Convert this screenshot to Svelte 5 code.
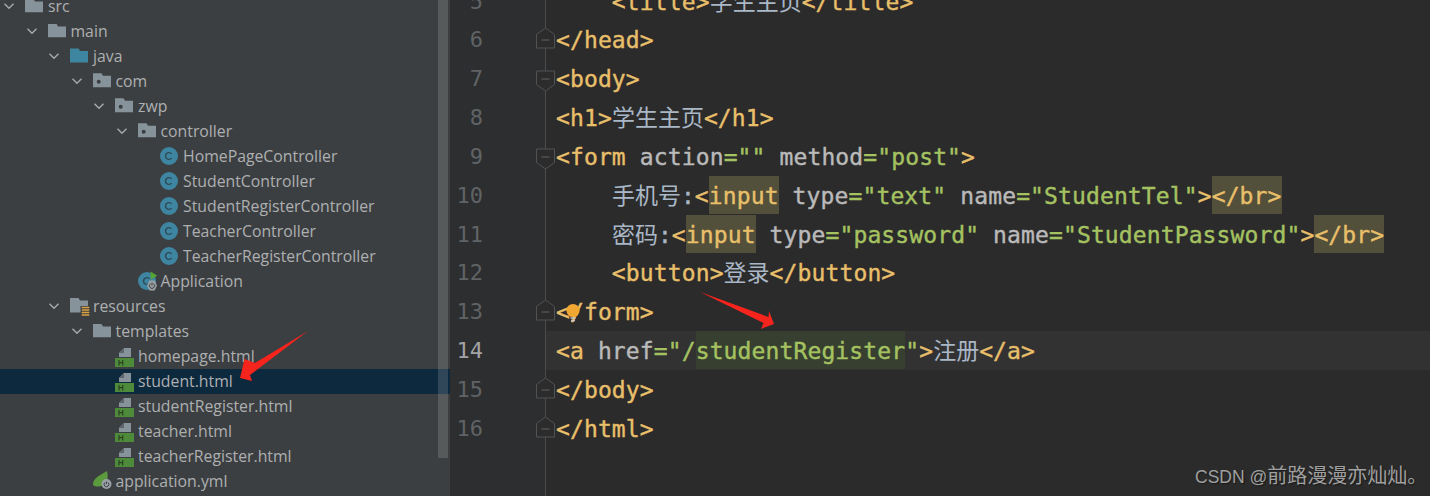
<script>
  const tree = [
    { l: 0, label: 'src', icon: 'folder', open: true },
    { l: 1, label: 'main', icon: 'folder', open: true },
    { l: 2, label: 'java', icon: 'source', open: true },
    { l: 3, label: 'com', icon: 'package', open: true },
    { l: 4, label: 'zwp', icon: 'package', open: true },
    { l: 5, label: 'controller', icon: 'package', open: true },
    { l: 6, label: 'HomePageController', icon: 'class' },
    { l: 6, label: 'StudentController', icon: 'class' },
    { l: 6, label: 'StudentRegisterController', icon: 'class' },
    { l: 6, label: 'TeacherController', icon: 'class' },
    { l: 6, label: 'TeacherRegisterController', icon: 'class' },
    { l: 5, label: 'Application', icon: 'app' },
    { l: 2, label: 'resources', icon: 'resources', open: true },
    { l: 3, label: 'templates', icon: 'folder', open: true },
    { l: 4, label: 'homepage.html', icon: 'html' },
    { l: 4, label: 'student.html', icon: 'html', selected: true },
    { l: 4, label: 'studentRegister.html', icon: 'html' },
    { l: 4, label: 'teacher.html', icon: 'html' },
    { l: 4, label: 'teacherRegister.html', icon: 'html' },
    { l: 3, label: 'application.yml', icon: 'yml' }
  ];

  const lines = [
    { n: 5, code: [['t', '    <title>'], ['c', '学生主页'], ['t', '</title>']] },
    { n: 6, fold: 'up', code: [['t', '</head>']] },
    { n: 7, fold: 'down', code: [['t', '<body>']] },
    { n: 8, code: [['t', '<h1>'], ['c', '学生主页'], ['t', '</h1>']] },
    { n: 9, fold: 'down', code: [['t', '<form '], ['n', 'action'], ['s', '=""'], ['n', ' method'], ['s', '="post"'], ['t', '>']] },
    { n: 10, code: [['t', '    '], ['c', '手机号'], ['p', ':'], ['t', '<'], ['h', 'input'], ['n', ' type'], ['s', '="text"'], ['n', ' name'], ['s', '="StudentTel"'], ['t', '>'], ['h', '</br>']] },
    { n: 11, code: [['t', '    '], ['c', '密码'], ['p', ':'], ['t', '<'], ['h', 'input'], ['n', ' type'], ['s', '="password"'], ['n', ' name'], ['s', '="StudentPassword"'], ['t', '>'], ['h', '</br>']] },
    { n: 12, code: [['t', '    <button>'], ['c', '登录'], ['t', '</button>']] },
    { n: 13, fold: 'up', bulb: true, code: [['t', '</form>']] },
    { n: 14, active: true, code: [['t', '<a '], ['n', 'href'], ['s', '="/'], ['g', 'studentRegister'], ['s', '"'], ['t', '>'], ['c', '注册'], ['t', '</a>']] },
    { n: 15, fold: 'up', code: [['t', '</body>']] },
    { n: 16, fold: 'up', code: [['t', '</html>']] },
    { n: '', code: [] },
    { n: '', code: [] }
  ];
</script>

<div class="ide">
  <aside class="project">
    <ul class="tree">
      {#each tree as item}
        <li class="row" class:selected={item.selected} style="--level: {item.l}">
          <span class="chevron">
            {#if item.open}
              <svg width="12" height="12" viewBox="0 0 12 12"><path d="M1.500 3.800 6 8.300l4.500-4.500" fill="none" stroke="#a7a9ab" stroke-width="1.400" /></svg>
            {/if}
          </span>
          <span class="icon">
            {#if item.icon === 'folder'}
              <svg width="18" height="18" viewBox="0 0 18 18"><path d="M0 2h8.500l1.500 2.500h8v10.800H0z" fill="#87939a" /></svg>
            {:else if item.icon === 'source'}
              <svg width="18" height="18" viewBox="0 0 18 18"><path d="M0 1.500h8.500l1.500 2.500h8v11.500H0z" fill="#3e86a0" /></svg>
            {:else if item.icon === 'package'}
              <svg width="18" height="18" viewBox="0 0 18 18"><path d="M0 1.300h8.500l1.500 2.500h8v11.500H0z" fill="#87939a" /><circle cx="5.700" cy="9.700" r="2" fill="#3c3f41" /></svg>
            {:else if item.icon === 'resources'}
              <svg class="over res" width="20" height="20" viewBox="0 0 20 20">
                <path d="M0 1h8.500L10 3.500h8v12H0z" fill="#87939a" />
                <path d="M10.500 9h9.500v10.500h-9.500z" fill="#3c3f41" />
                <path d="M11.700 10.500h7.600M11.700 13h7.600M11.700 15.500h7.600M11.700 18h7.600" stroke="#d9a343" stroke-width="1.500" />
              </svg>
            {:else if item.icon === 'class'}
              <svg width="18" height="18" viewBox="0 0 18 18"><circle cx="9" cy="9" r="9" fill="#3d85a1" /><path d="M11.600 6.900A3.400 3.400 0 1 0 11.600 11.100" fill="none" stroke="#2f4a56" stroke-width="1.400" /></svg>
            {:else if item.icon === 'app'}
              <svg class="over" width="22" height="22" viewBox="0 0 22 22">
                <circle cx="9" cy="11" r="9" fill="#3d85a1" />
                <path d="M11.600 8.900A3.400 3.400 0 1 0 11.600 13.100" fill="none" stroke="#2f4a56" stroke-width="1.400" />
                <path d="M12.700 1.500l6.500 4.200-6.500 3.800z" fill="#55a630" />
                <path d="M11.500 10.500h5.200l2.300 5-2.300 5h-5.200L9 15.500z" fill="#9aa1a6" />
                <path d="M12.400 13.700a2.600 2.600 0 1 0 3.200 0M14 12.500v3" fill="none" stroke="#3c3f41" stroke-width="1" />
              </svg>
            {:else if item.icon === 'html'}
              <svg class="over html" width="20" height="22" viewBox="0 0 20 22">
                <path d="M4 10V6L9 1h7v9z" fill="#87939a" />
                <path d="M4 6h5V1z" fill="#5d666c" />
                <path d="M0 11h19v9H0z" fill="#4d8a3a" />
                <path d="M4 13v5.500M7.700 13v5.500M4 15.700h3.700" fill="none" stroke="#2a4423" stroke-width="1.200" />
              </svg>
            {:else if item.icon === 'yml'}
              <svg class="over" width="20" height="20" viewBox="0 0 20 20">
                <path d="M0 15C0 8 6 6 14 1c1 5 1 8-1 12-2 3-9 5-13 2z" fill="#5c9a3e" />
                <circle cx="13.500" cy="14" r="5" fill="#9aa1a6" />
                <path d="M11.900 12.500a2.400 2.400 0 1 0 3.200 0M13.500 11.500v2.500" fill="none" stroke="#3c3f41" stroke-width="1" />
              </svg>
            {/if}
          </span>
          <span class="label">{item.label}</span>
        </li>
      {/each}
    </ul>
    <div class="scrollbar"></div>
  </aside>

  <main class="editor">
    {#each lines as line}
      <div class="line" class:active={line.active}>
        <span class="num">{line.n}</span>
        <span class="fold">
          {#if line.fold === 'up'}
            <svg class="up" width="19" height="22" viewBox="0 0 19 22"><path d="M.500 21V7.500L9.500 1l9 6.500V21z" fill="#2c2c2c" stroke="#505254" /><path d="M5.500 13h8" stroke="#606366" /></svg>
          {:else if line.fold === 'down'}
            <svg class="down" width="19" height="22" viewBox="0 0 19 22"><path d="M.500 1v13.500L9.500 21l9-6.500V1z" fill="#2c2c2c" stroke="#505254" /><path d="M5.500 9h8" stroke="#606366" /></svg>
          {/if}
        </span>
        <code class="code">{#each line.code as [kind, text]}<span class={kind}>{text}</span>{/each}{#if line.bulb}<svg class="bulb" width="16" height="22" viewBox="0 0 16 22"><circle cx="8" cy="7.500" r="6.600" fill="#f0a732" /><path d="M5.500 15h5M6 17.500h4" stroke="#c8c8c8" stroke-width="1.300" /></svg>{/if}</code>
      </div>
    {/each}
  </main>

  <svg class="arrows" width="1430" height="496" viewBox="0 0 1430 496">
    <path d="M308 331 255 363 244.500 359 240 378 252 381 250 375z" fill="#f5241c" />
    <path d="M700 292 768.500 317 769 311 774 324 761 329 763.500 323z" fill="#f5241c" />
  </svg>
  <div class="watermark">CSDN @<span class="wm-cjk">前路漫漫亦灿灿。</span></div>
</div>

<style>
  :global(body) {
    margin: 0;
    background: #2b2b2b;
  }
  .ide {
    position: relative;
    display: flex;
    width: 1430px;
    height: 496px;
    overflow: hidden;
  }
  .project {
    position: relative;
    flex: 0 0 450px;
    background: #3c3f41;
    overflow: hidden;
  }
  .tree {
    list-style: none;
    margin: -6.500px 0 0;
    padding: 0;
  }
  .row {
    display: flex;
    align-items: center;
    height: 25px;
    padding-left: calc(var(--level) * 22.500px + 3px);
    font: 15.800px/25px "Open Sans", "Noto Sans", sans-serif;
    color: #adafb1;
  }
  .row.selected {
    background: #0d293e;
  }
  .chevron {
    flex: 0 0 12px;
    display: flex;
    margin-right: 10px;
  }
  .icon {
    position: relative;
    flex: 0 0 18px;
    height: 18px;
    display: flex;
    margin-right: 5px;
  }
  .icon .over {
    position: absolute;
    left: 0;
    top: -2px;
  }
  .icon .res,
  .icon .html {
    top: 0;
  }
  .scrollbar {
    position: absolute;
    left: 438px;
    top: 0;
    width: 10px;
    height: 458px;
    background: rgba(255, 255, 255, 0.14);
  }
  .editor {
    flex: 1;
    margin-top: -18.400px;
    background: #2b2b2b;
  }
  .line {
    display: flex;
    height: 38.830px;
    font: 23px/38.830px "DejaVu Sans Mono", "Noto Sans CJK SC", monospace;
    letter-spacing: 0.120px;
  }
  .num {
    flex: 0 0 95px;
    box-sizing: border-box;
    padding: 1px 62px 0 0;
    text-align: right;
    color: #606366;
    font-size: 22px;
    letter-spacing: 0;
    background: #2d2e2f;
  }
  .active .num {
    color: #a4a3a3;
  }
  .fold {
    position: relative;
    flex: 0 0 11px;
    border-left: 1px solid #4a4b4c;
    box-sizing: border-box;
  }
  .fold svg {
    position: absolute;
    left: -10px;
  }
  .fold .up {
    top: 7px;
  }
  .fold .down {
    top: 11px;
  }
  .code {
    position: relative;
    flex: 1;
    box-sizing: border-box;
    padding-top: 1px;
    font: inherit;
    white-space: pre;
    -webkit-text-stroke: 0.4px currentColor;
  }
  .active .fold,
  .active .code {
    background: #323232;
  }
  .t { color: #e8bf6a; }
  .n { color: #bababa; }
  .s { color: #a5c261; }
  .p { color: #a9b7c6; }
  .c {
    color: #a9b7c6;
    letter-spacing: 0;
    -webkit-text-stroke: 0;
  }
  .h {
    padding: 7px 0 5px;
    color: #e8bf6a;
    background: #52503a;
  }
  .g {
    padding: 7px 0 5px;
    color: #a5c261;
    background: #374030;
  }
  .bulb {
    position: absolute;
    left: 9px;
    top: 11px;
  }
  .arrows {
    position: absolute;
    left: 0;
    top: 0;
    pointer-events: none;
  }
  .watermark {
    position: absolute;
    left: 1195px;
    bottom: 7px;
    white-space: nowrap;
    font: 17.500px/24px "Liberation Sans", "Noto Sans CJK SC", sans-serif;
    color: #a0a0a0;
    text-shadow: 1px 1px 1px #1a1a1a;
  }
  .wm-cjk {
    font-size: 20px;
  }
</style>
